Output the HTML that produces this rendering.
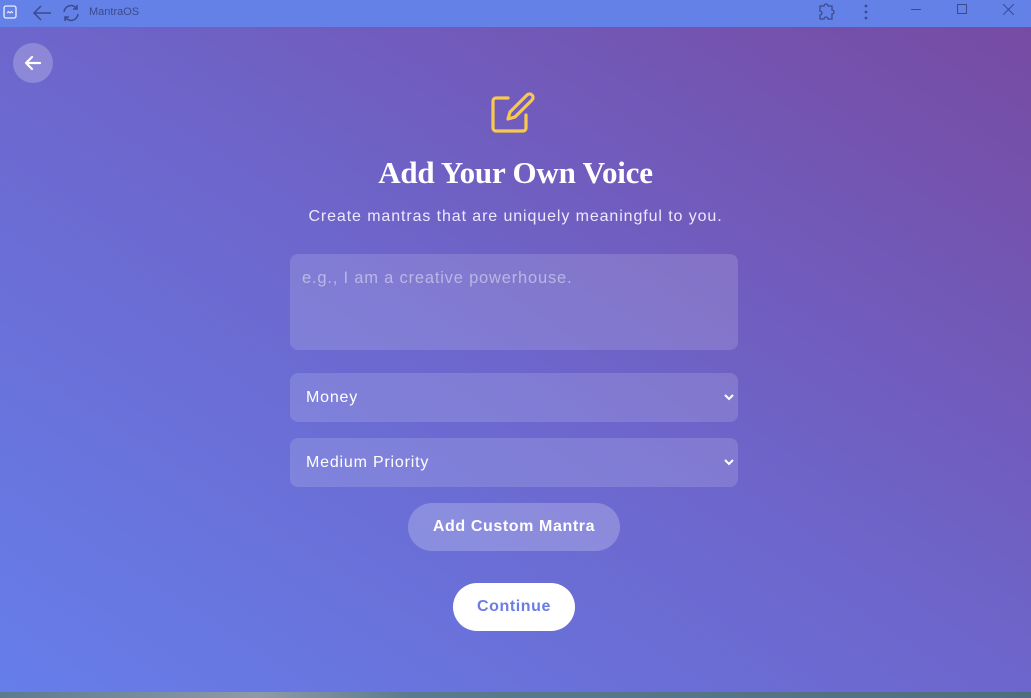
<!DOCTYPE html>
<html><head><meta charset="utf-8"><style>
*{box-sizing:border-box;margin:0;padding:0}
body{width:1031px;height:698px;overflow:hidden;font-family:"Liberation Sans",sans-serif;background:#5a7a8a}
.bar{position:absolute;left:0;top:0;width:1031px;height:27px;background:#6481e8;color:#3b4a8c;font-size:11px}
.main{position:absolute;left:0;top:27px;width:1031px;height:665px;background:linear-gradient(to top right,#667eea 0%,#6d66cc 50%,#774ba3 100%)}
.bottom{position:absolute;left:0;top:692px;width:1031px;height:6px;background:linear-gradient(90deg,#5b7a90,#8f9aa8 25%,#5a7a8e 40%,#4f6f80)}
.back{position:absolute;left:13px;top:16px;width:40px;height:40px;border-radius:50%;background:rgba(255,255,255,.22)}
h1{position:absolute;top:128px;width:100%;text-align:center;font-family:"Liberation Serif",serif;font-weight:bold;font-size:31px;color:#fff;letter-spacing:-.2px}
.sub{position:absolute;top:181px;width:100%;text-align:center;color:#eee8ff;font-size:16px;letter-spacing:.9px}
.field{position:absolute;left:290px;width:448px;border-radius:8px;background:rgba(255,255,255,.14);color:#fff;font-size:16px;letter-spacing:.8px}
.btn{position:absolute;border-radius:24px;text-align:center;font-weight:bold;font-size:16px;letter-spacing:.6px}
</style></head><body>
<div class="bar">
<svg style="position:absolute;left:3px;top:5px" width="14" height="14" viewBox="0 0 14 14"><rect x="1" y="1" width="12" height="12" rx="2" fill="none" stroke="#eef" stroke-width="1.3"/><path d="M4 8l1.5-1.5L7 8l1.5-1.5L10 8" stroke="#eef" fill="none" stroke-width="1"/></svg>
<svg style="position:absolute;left:31px;top:3px" width="22" height="20" viewBox="0 0 22 20"><path d="M20 10H3M10 3L3 10l7 7" stroke="#3b4a8c" fill="none" stroke-width="1.5"/></svg>
<svg style="position:absolute;left:60px;top:2px" width="22" height="22" viewBox="0 0 22 22"><path d="M4 10a7 7 0 0 1 13-3M18 12a7 7 0 0 1-13 3M17 3v4h-4M5 19v-4h4" stroke="#3b4a8c" fill="none" stroke-width="1.5"/></svg>
<span style="position:absolute;left:89px;top:6px">MantraOS</span>
<svg style="position:absolute;left:818px;top:3px" width="18" height="18" viewBox="0 0 18 18"><path d="M2 3h4a2 2 0 0 1 4 0h4v4a2 2 0 0 1 0 4v5H10a2 2 0 0 0-4 0H2v-4a2 2 0 0 0 0-4z" stroke="#3b4a8c" fill="none" stroke-width="1.3"/></svg>
<svg style="position:absolute;left:862px;top:3px" width="8" height="18"><circle cx="4" cy="3" r="1.4" fill="#3b4a8c"/><circle cx="4" cy="9" r="1.4" fill="#3b4a8c"/><circle cx="4" cy="15" r="1.4" fill="#3b4a8c"/></svg>
<div style="position:absolute;left:911px;top:9px;width:10px;height:1px;background:#3b4a8c"></div>
<div style="position:absolute;left:957px;top:4px;width:10px;height:10px;border:1px solid #3b4a8c"></div>
<svg style="position:absolute;left:1003px;top:4px" width="11" height="11"><path d="M0 0L11 11M11 0L0 11" stroke="#3b4a8c"/></svg>
</div>
<div class="main">
<div class="back"><svg width="40" height="40" viewBox="0 0 40 40"><path d="M27 20H13M19 14l-6 6 6 6" stroke="#fff" stroke-width="2.2" fill="none" stroke-linecap="round" stroke-linejoin="round"/></svg></div>
<svg style="position:absolute;left:489px;top:63px" width="50" height="50" viewBox="0 0 50 50"><path d="M19 8H7a3 3 0 0 0-3 3v27a3 3 0 0 0 3 3h27a3 3 0 0 0 3-3V25" stroke="#f7c94f" stroke-width="3.2" fill="none" stroke-linecap="round" stroke-linejoin="round"/><path d="M38 5a3.5 3.5 0 0 1 5 5L26 27l-7 2 2-7z" stroke="#f7c94f" stroke-width="3.2" fill="none" stroke-linejoin="round"/></svg>
<h1>Add Your Own Voice</h1>
<div class="sub">Create mantras that are uniquely meaningful to you.</div>
<div class="field" style="top:227px;height:96px;padding:15px 12px;color:rgba(255,255,255,.45);font-size:16.5px">e.g., I am a creative powerhouse.</div>
<div class="field" style="top:346px;height:49px;padding:16px 16px">Money<svg style="position:absolute;right:4px;top:20px" width="10" height="8"><path d="M1 2l4 4 4-4" stroke="#fff" stroke-width="2" fill="none"/></svg></div>
<div class="field" style="top:411px;height:49px;padding:16px 16px">Medium Priority<svg style="position:absolute;right:4px;top:20px" width="10" height="8"><path d="M1 2l4 4 4-4" stroke="#fff" stroke-width="2" fill="none"/></svg></div>
<div class="btn" style="left:408px;top:476px;width:212px;height:48px;line-height:48px;background:rgba(255,255,255,.22);color:#fff">Add Custom Mantra</div>
<div class="btn" style="left:453px;top:556px;width:122px;height:48px;line-height:48px;background:#fff;color:#6a7de2">Continue</div>
</div>
<div class="bottom"></div>
</body></html>
